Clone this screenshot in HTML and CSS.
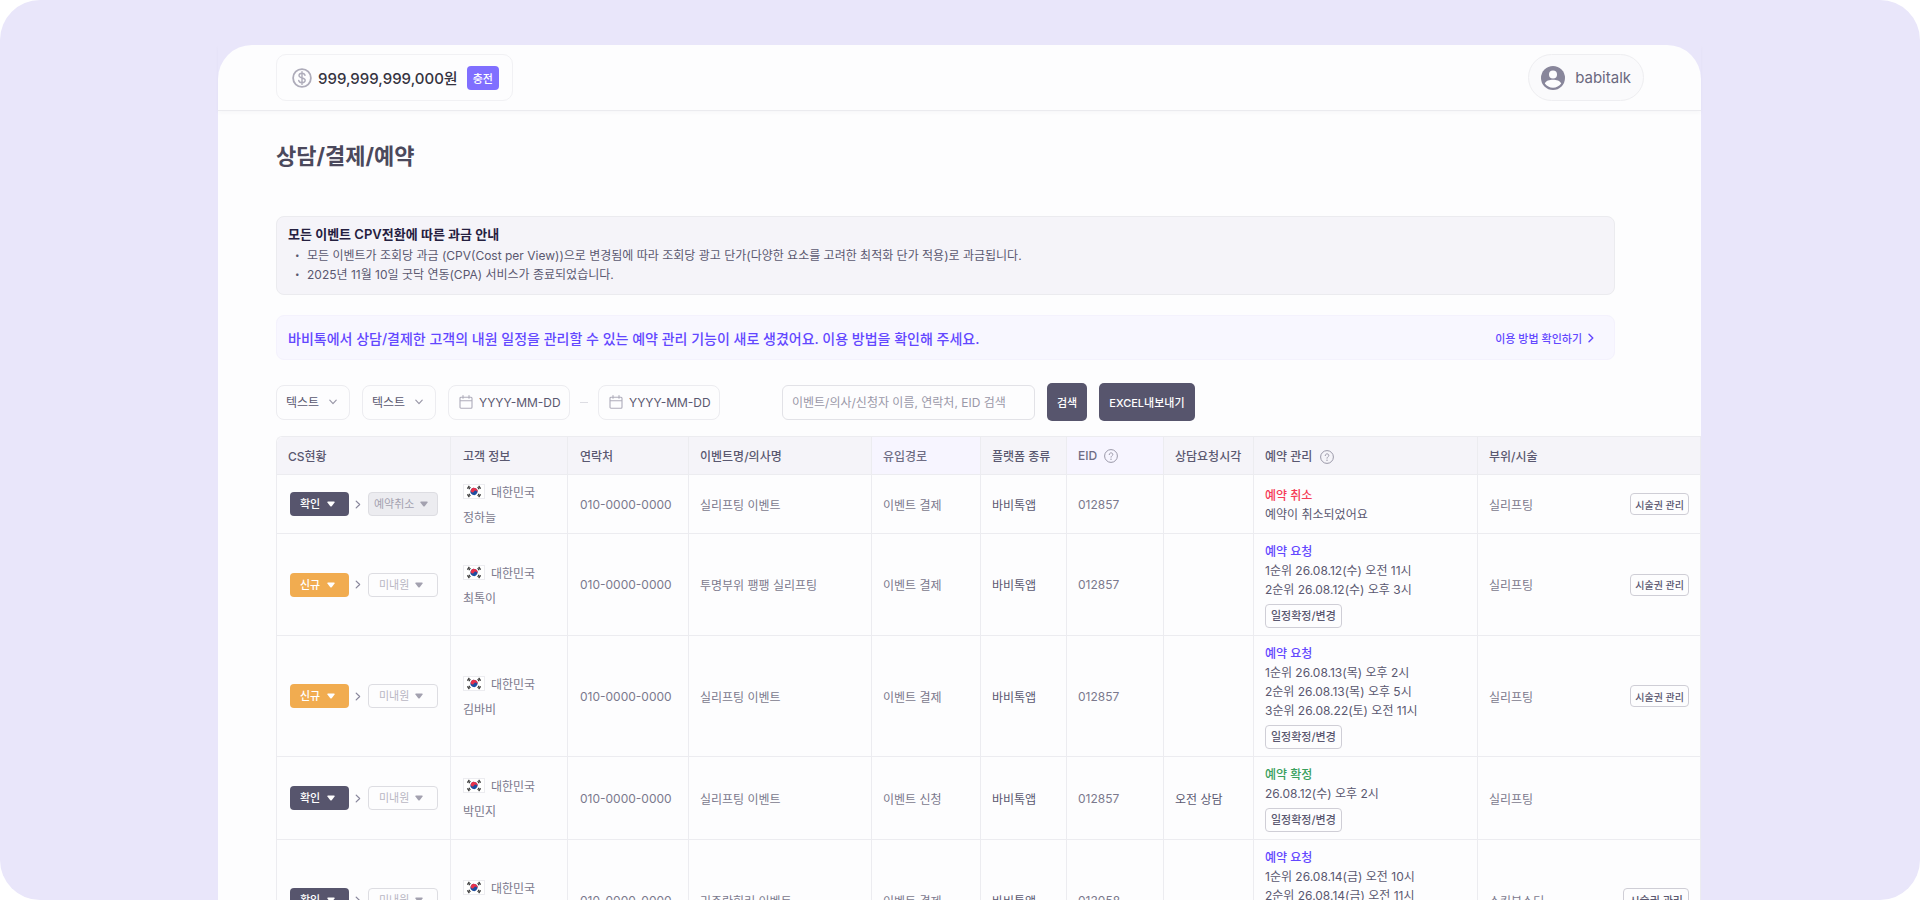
FILE: index.html
```html
<!DOCTYPE html>
<html lang="ko">
<head>
  <meta charset="utf-8" />
  <title>상담/결제/예약</title>
  <link rel="stylesheet" href="styles.css">
</head>
<body>
  <svg class="sprite" aria-hidden="true">
    <symbol id="caret" viewBox="0 0 8 6"><path d="M1 .6h6q1.4 0 .6 1L4.7 5.2q-.7.7-1.4 0L.4 1.6Q-.4.6 1 .6z" fill="currentColor"/></symbol>
    <symbol id="arrow-down" viewBox="0 0 8 6"><path d="M.8 1.2 4 4.6l3.2-3.4" fill="none" stroke="currentColor" stroke-width="1.2" stroke-linecap="round" stroke-linejoin="round"/></symbol>
    <symbol id="arrow-right" viewBox="0 0 6 10"><path d="m1 1.3 3.8 3.7L1 8.7" fill="none" stroke="currentColor" stroke-width="1.4" stroke-linecap="round" stroke-linejoin="round"/></symbol>
    <symbol id="calendar" viewBox="0 0 14 14"><path d="M1 5.8h12M4 .6v2.6M10 .6v2.6M2 2.2h10a1 1 0 0 1 1 1v9a1 1 0 0 1-1 1H2a1 1 0 0 1-1-1v-9a1 1 0 0 1 1-1z" fill="none" stroke="currentColor" stroke-width="1.1" stroke-linecap="round"/></symbol>
    <symbol id="help" viewBox="0 0 14 14"><circle cx="7" cy="7" r="6.4" fill="none" stroke="currentColor"/><path d="M5.2 5.6c0-2.4 3.6-2.3 3.6-.1 0 1.3-1.8 1.3-1.8 2.7" fill="none" stroke="currentColor" stroke-linecap="round"/><circle cx="7" cy="10.2" r=".7" fill="currentColor"/></symbol>
    <symbol id="flag" viewBox="0 0 22 15">
      <rect x=".5" y=".5" width="21" height="14" fill="#fff" stroke="#ececf0"/>
      <g transform="rotate(25 11 7.5)">
        <circle cx="11" cy="7.5" r="3.5" fill="#1b4da0"/>
        <path d="M7.5 7.5a3.5 3.5 0 0 1 7 0a1.75 1.75 0 0 0-3.5 0a1.75 1.75 0 0 1-3.5 0z" fill="#e8304a"/>
      </g>
      <path d="M4.4 4.6 6.3 1.9M5.9 5.3 7.3 3M15.7 1.9l1.9 2.7M14.7 3l1.4 2.3M4.4 10.4l1.9 2.7M5.9 9.7l1.4 2.3M15.7 13.1l1.9-2.7M14.7 12l1.4-2.3" stroke="#333" stroke-width="1.2"/>
    </symbol>
  </svg>

  <div class="stage">
    <div class="panel">
      <header class="topbar">
        <div class="balance">
          <svg class="coin" viewBox="0 0 20 20"><circle cx="10" cy="10" r="8.9" fill="none" stroke="currentColor" stroke-width="1.8"/><path d="M13 7.4C12.7 6 11.6 5.3 10 5.3c-1.8 0-3 .9-3 2.3 0 3.2 6.2 1.5 6.2 4.7 0 1.5-1.3 2.4-3.2 2.4-1.8 0-3-.8-3.3-2.3M10 3.6v12.8" fill="none" stroke="currentColor" stroke-width="1.4" stroke-linecap="round"/></svg>
          <strong>999,999,999,000원</strong>
          <button class="charge">충전</button>
        </div>
        <button class="user">
          <svg viewBox="0 0 24 24"><circle cx="12" cy="12" r="12" fill="#88869b"/><circle cx="12" cy="8.6" r="4" fill="#fdfdfe"/><path d="M3.8 17.6C5 14.8 8.4 13.8 12 13.8s7 1 8.2 3.8c-1.9 2.7-4.9 4.2-8.2 4.2s-6.3-1.5-8.2-4.2z" fill="#fdfdfe"/></svg>
          babitalk
        </button>
      </header>

      <main>
        <h1>상담/결제/예약</h1>

        <section class="notice">
          <h2>모든 이벤트 CPV전환에 따른 과금 안내</h2>
          <ul>
            <li>모든 이벤트가 조회당 과금 (CPV(Cost per View))으로 변경됨에 따라 조회당 광고 단가(다양한 요소를 고려한 최적화 단가 적용)로 과금됩니다.</li>
            <li>2025년 11월 10일 굿닥 연동(CPA) 서비스가 종료되었습니다.</li>
          </ul>
        </section>

        <section class="guide">
          <p>바비톡에서 상담/결제한 고객의 내원 일정을 관리할 수 있는 예약 관리 기능이 새로 생겼어요. 이용 방법을 확인해 주세요.</p>
          <a href="#">이용 방법 확인하기 <svg><use href="#arrow-right"/></svg></a>
        </section>

        <form class="filters">
          <div class="picker"><select aria-label="상태"><option>텍스트</option></select><svg><use href="#arrow-down"/></svg></div>
          <div class="picker"><select aria-label="기간 기준"><option>텍스트</option></select><svg><use href="#arrow-down"/></svg></div>
          <div class="period">
            <label class="date"><svg><use href="#calendar"/></svg><input type="text" placeholder="YYYY-MM-DD" aria-label="시작일"></label>
            <span class="dash"></span>
            <label class="date"><svg><use href="#calendar"/></svg><input type="text" placeholder="YYYY-MM-DD" aria-label="종료일"></label>
          </div>
          <input class="search" type="text" placeholder="이벤트/의사/신청자 이름, 연락처, EID 검색" aria-label="검색어">
          <button type="button" class="dark">검색</button>
          <button type="button" class="dark">EXCEL내보내기</button>
        </form>

        <table>
          <colgroup>
            <col class="c-status"><col class="c-customer"><col class="c-phone"><col class="c-event"><col class="c-route">
            <col class="c-platform"><col class="c-eid"><col class="c-time"><col class="c-booking"><col>
          </colgroup>
          <thead>
            <tr>
              <th>CS현황</th>
              <th>고객 정보</th>
              <th>연락처</th>
              <th>이벤트명/의사명</th>
              <th class="tint">유입경로</th>
              <th>플랫폼 종류</th>
              <th class="tint">EID <svg class="help"><use href="#help"/></svg></th>
              <th>상담요청시각</th>
              <th>예약 관리 <svg class="help"><use href="#help"/></svg></th>
              <th>부위/시술</th>
            </tr>
          </thead>
          <tbody>
            <tr>
              <td><div class="status">
                <div class="pill done"><select aria-label="CS 상태"><option>확인</option></select><svg><use href="#caret"/></svg></div>
                <svg class="next"><use href="#arrow-right"/></svg>
                <div class="pill visit cancelled"><select aria-label="내원 상태" disabled><option>예약취소</option></select><svg><use href="#caret"/></svg></div>
              </div></td>
              <td class="customer"><div><svg class="flag"><use href="#flag"/></svg>대한민국</div><div>정하늘</div></td>
              <td>010-0000-0000</td>
              <td>실리프팅 이벤트</td>
              <td>이벤트 결제</td>
              <td class="strong">바비톡앱</td>
              <td>012857</td>
              <td></td>
              <td class="booking"><b class="red">예약 취소</b><p>예약이 취소되었어요</p></td>
              <td><div class="treatment">실리프팅 <button class="line small">시술권 관리</button></div></td>
            </tr>
            <tr>
              <td><div class="status">
                <div class="pill new"><select aria-label="CS 상태"><option>신규</option></select><svg><use href="#caret"/></svg></div>
                <svg class="next"><use href="#arrow-right"/></svg>
                <div class="pill visit"><select aria-label="내원 상태"><option>미내원</option></select><svg><use href="#caret"/></svg></div>
              </div></td>
              <td class="customer"><div><svg class="flag"><use href="#flag"/></svg>대한민국</div><div>최톡이</div></td>
              <td>010-0000-0000</td>
              <td>투명부위 팽팽 실리프팅</td>
              <td>이벤트 결제</td>
              <td class="strong">바비톡앱</td>
              <td>012857</td>
              <td></td>
              <td class="booking"><b class="purple">예약 요청</b><p>1순위 26.08.12(수) 오전 11시</p><p>2순위 26.08.12(수) 오후 3시</p><button class="line">일정확정/변경</button></td>
              <td><div class="treatment">실리프팅 <button class="line small">시술권 관리</button></div></td>
            </tr>
            <tr>
              <td><div class="status">
                <div class="pill new"><select aria-label="CS 상태"><option>신규</option></select><svg><use href="#caret"/></svg></div>
                <svg class="next"><use href="#arrow-right"/></svg>
                <div class="pill visit"><select aria-label="내원 상태"><option>미내원</option></select><svg><use href="#caret"/></svg></div>
              </div></td>
              <td class="customer"><div><svg class="flag"><use href="#flag"/></svg>대한민국</div><div>김바비</div></td>
              <td>010-0000-0000</td>
              <td>실리프팅 이벤트</td>
              <td>이벤트 결제</td>
              <td class="strong">바비톡앱</td>
              <td>012857</td>
              <td></td>
              <td class="booking"><b class="purple">예약 요청</b><p>1순위 26.08.13(목) 오후 2시</p><p>2순위 26.08.13(목) 오후 5시</p><p>3순위 26.08.22(토) 오전 11시</p><button class="line">일정확정/변경</button></td>
              <td><div class="treatment">실리프팅 <button class="line small">시술권 관리</button></div></td>
            </tr>
            <tr>
              <td><div class="status">
                <div class="pill done"><select aria-label="CS 상태"><option>확인</option></select><svg><use href="#caret"/></svg></div>
                <svg class="next"><use href="#arrow-right"/></svg>
                <div class="pill visit"><select aria-label="내원 상태"><option>미내원</option></select><svg><use href="#caret"/></svg></div>
              </div></td>
              <td class="customer"><div><svg class="flag"><use href="#flag"/></svg>대한민국</div><div>박민지</div></td>
              <td>010-0000-0000</td>
              <td>실리프팅 이벤트</td>
              <td>이벤트 신청</td>
              <td class="strong">바비톡앱</td>
              <td>012857</td>
              <td class="strong">오전 상담</td>
              <td class="booking"><b class="green">예약 확정</b><p>26.08.12(수) 오후 2시</p><button class="line">일정확정/변경</button></td>
              <td>실리프팅</td>
            </tr>
            <tr>
              <td><div class="status">
                <div class="pill done"><select aria-label="CS 상태"><option>확인</option></select><svg><use href="#caret"/></svg></div>
                <svg class="next"><use href="#arrow-right"/></svg>
                <div class="pill visit"><select aria-label="내원 상태"><option>미내원</option></select><svg><use href="#caret"/></svg></div>
              </div></td>
              <td class="customer"><div><svg class="flag"><use href="#flag"/></svg>대한민국</div><div>이서연</div></td>
              <td>010-0000-0000</td>
              <td>리쥬란힐러 이벤트</td>
              <td>이벤트 결제</td>
              <td class="strong">바비톡앱</td>
              <td>013058</td>
              <td></td>
              <td class="booking"><b class="purple">예약 요청</b><p>1순위 26.08.14(금) 오전 10시</p><p>2순위 26.08.14(금) 오전 11시</p><p>3순위 26.08.21(금) 오후 2시</p><button class="line">일정확정/변경</button></td>
              <td><div class="treatment">스킨부스터 <button class="line">시술권 관리</button></div></td>
            </tr>
          </tbody>
        </table>
      </main>
    </div>
  </div>
</body>
</html>
```
FILE: styles.css
```css
* {
  box-sizing: border-box;
}
body {
  margin: 0;
  background: #fff;
  color: #5a5870;
  font-family: Inter, "Noto Sans CJK KR", sans-serif;
  font-size: 12px;
}
button, input, select {
  font: inherit;
  color: inherit;
}
button {
  cursor: pointer;
}
h1, h2, p, ul {
  margin: 0;
  padding: 0;
}
.sprite {
  display: none;
}
.stage {
  height: 100vh;
  overflow: hidden;
  padding: 45px 219px 0 218px;
  background: #e9e6fa;
  border-radius: 40px;
}
.panel {
  min-height: 100%;
  background: #fdfdfe;
  border-radius: 34px 34px 0 0;
}

/* top bar */
.topbar {
  display: flex;
  justify-content: space-between;
  align-items: center;
  height: 66px;
  padding: 0 57px 0 58px;
  border-bottom: 1px solid #ebebef;
  box-shadow: 0 2px 4px rgba(60, 55, 90, 0.03);
}
.balance {
  display: flex;
  align-items: center;
  height: 47px;
  padding: 0 13px 0 15px;
  border: 1px solid #f1f1f4;
  border-radius: 10px;
}
.coin {
  width: 20px;
  height: 20px;
  margin-right: 6px;
  color: #aeacba;
}
.balance strong {
  font-size: 15px;
  font-weight: 500;
  color: #35333f;
}
.charge {
  height: 24px;
  margin-left: 9px;
  padding: 0 6px;
  border: 0;
  border-radius: 4px;
  background: #806fff;
  color: #fff;
  font-size: 11px;
  font-weight: 500;
}
.user {
  display: flex;
  align-items: center;
  gap: 10px;
  height: 47px;
  padding: 0 12px;
  border: 1px solid #eeeef1;
  border-radius: 24px;
  background: #fafafc;
  color: #6a687e;
  font-size: 15px;
}
.user svg {
  width: 24px;
  height: 24px;
}

/* page content */
main {
  padding: 29px 0 0 58px;
}
h1 {
  line-height: 32px;
  font-size: 22px;
  font-weight: 700;
  color: #4b495c;
}
.notice, .guide {
  margin-right: 86px;
  padding: 0 11px;
  border: 1px solid #ebebef;
  border-radius: 8px;
}
.notice {
  margin-top: 44px;
  padding-top: 8px;
  padding-bottom: 10px;
  background: #f5f4f9;
}
.notice h2 {
  margin-bottom: 2px;
  line-height: 19px;
  font-size: 13px;
  font-weight: 600;
  color: #252040;
}
.notice li {
  display: flex;
  line-height: 19px;
}
.notice li::before {
  content: "•";
  flex: none;
  width: 12px;
  padding-left: 7px;
  font-size: 8px;
}
.guide {
  display: flex;
  align-items: center;
  justify-content: space-between;
  height: 45px;
  margin-top: 20px;
  padding-right: 20px;
  border-color: #f4f2fd;
  background: #f8f7ff;
  color: #6347ff;
}
.guide p {
  font-size: 14px;
  font-weight: 500;
}
.guide a {
  display: flex;
  align-items: center;
  gap: 6px;
  color: inherit;
  font-size: 11px;
  font-weight: 500;
  text-decoration: none;
}
.guide svg {
  width: 6px;
  height: 10px;
}

/* filters */
.filters {
  display: flex;
  align-items: center;
  gap: 12px;
  margin: 23px 0 15px;
}
.picker, .pill {
  display: grid;
  align-items: center;
}
.picker > *, .pill > * {
  grid-area: 1 / 1;
}
.picker svg, .pill svg {
  justify-self: end;
  width: 8px;
  height: 6px;
  pointer-events: none;
}
.picker select, .pill select {
  width: 100%;
  appearance: none;
  background: none;
  cursor: pointer;
}
.picker {
  width: 74px;
  color: #9a98a8;
}
.picker svg {
  margin-right: 13px;
}
.picker select, .date, .search {
  height: 35px;
  border: 1px solid #ececf0;
  border-radius: 8px;
}
.picker select {
  padding: 0 9px;
  color: #5a5870;
}
.period {
  display: flex;
  align-items: center;
  gap: 10px;
}
.date {
  display: flex;
  align-items: center;
  gap: 6px;
  width: 122px;
  padding: 0 4px 0 10px;
}
.date svg {
  flex: none;
  width: 14px;
  height: 14px;
  color: #aeacba;
}
.date input {
  width: 100%;
  min-width: 0;
  padding: 0;
  border: 0;
  background: none;
}
.date input::placeholder {
  color: #5a5870;
}
.dash {
  width: 8px;
  height: 1px;
  background: #dddde3;
}
.search {
  width: 253px;
  margin-left: 50px;
  padding: 0 9px;
  border-color: #e2e2e7;
  border-radius: 6px;
  background: none;
}
.search::placeholder {
  color: #9a98a8;
}
.dark {
  height: 38px;
  padding: 0 10px;
  border: 0;
  border-radius: 5px;
  background: #57556d;
  color: #fff;
  font-size: 11px;
  font-weight: 500;
}

/* table */
table {
  width: 100%;
  table-layout: fixed;
  border-collapse: separate;
  border-spacing: 0;
  border-top: 1px solid #ececf0;
  border-left: 1px solid #ececf0;
  border-top-left-radius: 6px;
  color: #7b798d;
}
.c-status { width: 174px; }
.c-customer { width: 117px; }
.c-phone { width: 121px; }
.c-event { width: 183px; }
.c-route { width: 109px; }
.c-platform { width: 86px; }
.c-eid { width: 97px; }
.c-time { width: 90px; }
.c-booking { width: 224px; }
th, td {
  padding: 0 11px;
  border-right: 1px solid #ececf0;
  border-bottom: 1px solid #ececf0;
  text-align: left;
  white-space: nowrap;
}
th:nth-child(2), td:nth-child(2),
th:nth-child(3), td:nth-child(3) {
  padding-left: 12px;
}
th {
  height: 38px;
  background: #f5f4f9;
  color: #5a5870;
  font-weight: 500;
}
th:first-child {
  border-top-left-radius: 6px;
}
th.tint {
  background: #f7f5ff;
  color: #6f6d84;
}
.help {
  width: 14px;
  height: 14px;
  margin-left: 4px;
  color: #9a98a8;
  vertical-align: -3px;
}
.strong {
  color: #5a5870;
}
.status {
  display: flex;
  align-items: center;
  padding-left: 2px;
}
.next {
  width: 6px;
  height: 9px;
  margin: 0 7px 0 6px;
  color: #88869b;
}
.pill {
  width: 59px;
  border-radius: 4px;
  color: #fff;
}
.pill select {
  height: 24px;
  padding: 0 10px;
  border: 0;
  font-size: 11px;
  font-weight: 500;
}
.pill svg {
  margin-right: 14px;
}
.done { background: #57556d; }
.new { background: #f1ac50; }
.visit {
  width: 70px;
  border: 1px solid #dddde2;
  color: #a3a1af;
}
.visit select {
  height: 22px;
  color: #b9b7c3;
  font-weight: 400;
  opacity: 1;
}
.cancelled {
  background: #ececf0;
}
.cancelled select {
  padding: 0 5px;
  color: #a3a1af;
}
.cancelled svg {
  margin-right: 9px;
}
.customer {
  padding-top: 4px;
  padding-bottom: 4px;
}
.customer div {
  display: flex;
  align-items: center;
  height: 25px;
}
.flag {
  width: 22px;
  height: 15px;
  margin-right: 6px;
}
.booking {
  padding-top: 8px;
  padding-bottom: 7px;
  line-height: 19px;
  color: #5a5870;
}
.booking b {
  display: block;
  font-weight: 500;
}
.booking .red { color: #f53b57; }
.booking .purple { color: #6347ff; }
.booking .green { color: #38a05c; }
.line {
  display: block;
  height: 24px;
  padding: 0 5px;
  border: 1px solid #cfced6;
  border-radius: 4px;
  background: #fdfdfe;
  color: #5a5870;
  font-size: 11px;
  font-weight: 500;
}
.booking .line {
  margin-top: 5px;
}
.small {
  height: 22px;
  padding: 0 4px;
  font-size: 10px;
}
.treatment {
  display: flex;
  align-items: center;
  justify-content: space-between;
}
```
